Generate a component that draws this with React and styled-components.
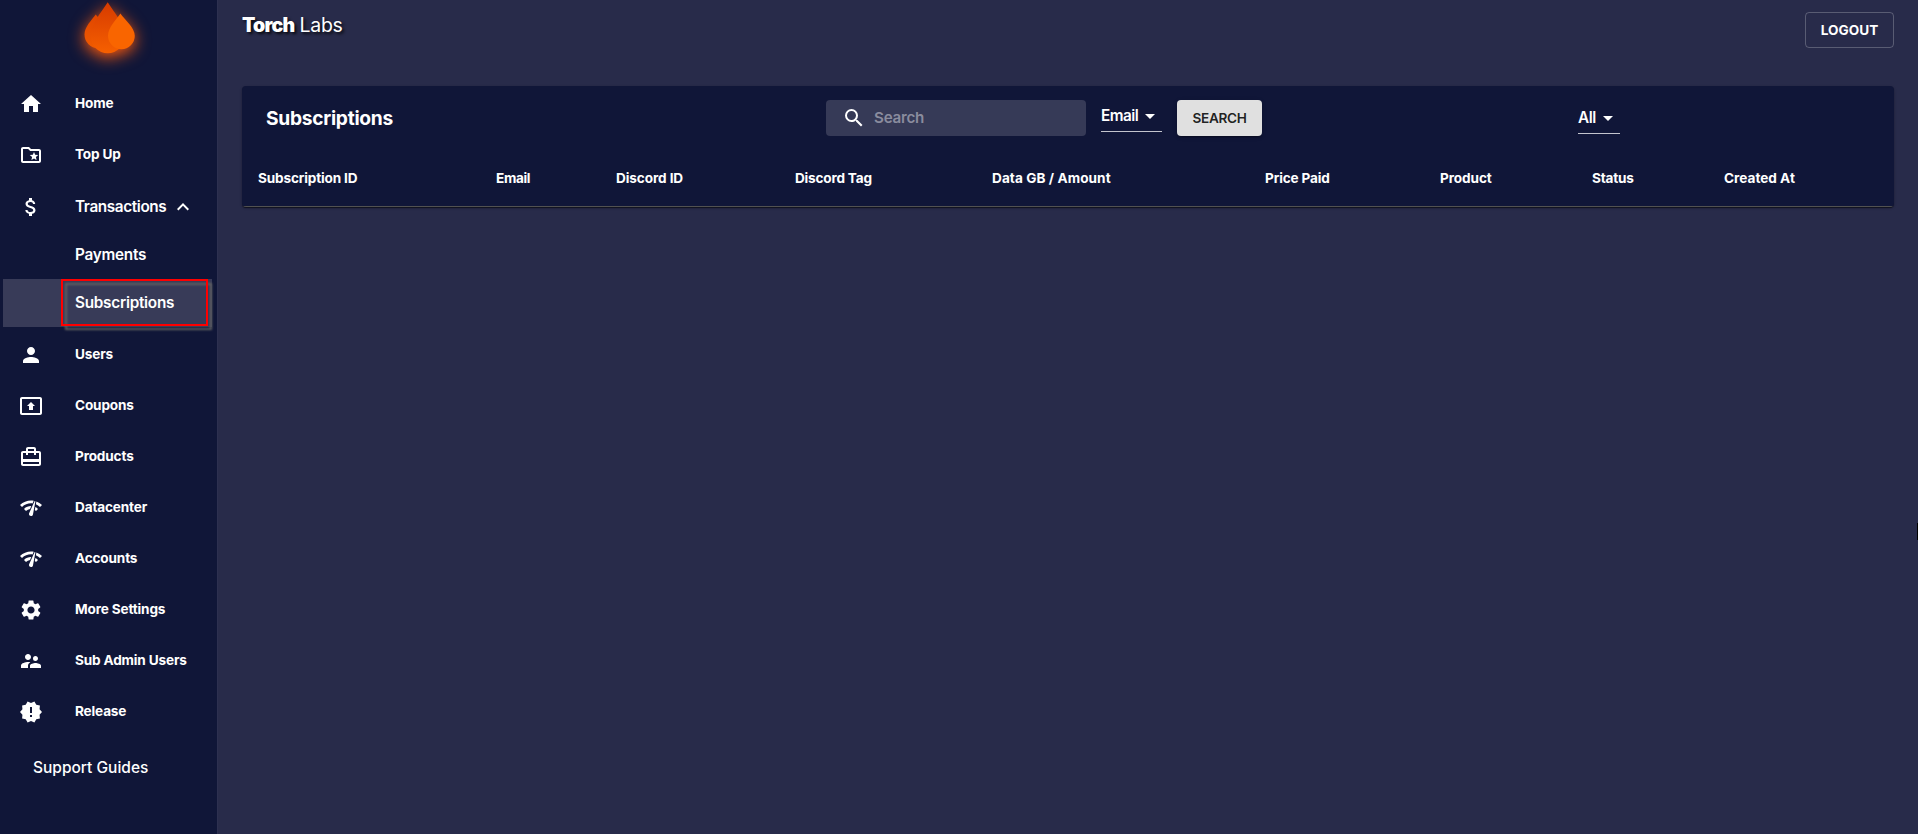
import React from "react";
import styled, { createGlobalStyle } from "styled-components";
import {
  MdHome,
  MdOutlineFolderSpecial,
  MdAttachMoney,
  MdExpandLess,
  MdPerson,
  MdPresentToAll,
  MdCardTravel,
  MdNetworkCheck,
  MdSettings,
  MdSupervisorAccount,
  MdNewReleases,
  MdSearch,
  MdArrowDropDown,
} from "react-icons/md";

const GlobalStyle = createGlobalStyle`
  *, *::before, *::after { box-sizing: border-box; }
  body {
    margin: 0;
    background: #282b4a;
    color: #fff;
    font-family: Inter, "Liberation Sans", sans-serif;
    overflow: hidden;
  }
`;

const Page = styled.div`
  position: relative;
  display: flex;
  height: 100vh;
`;

const Sidebar = styled.nav`
  flex: 0 0 218px;
  display: flex;
  flex-direction: column;
  background: #101638;
  border-right: 1px solid #2d3050;
`;

const LogoWrap = styled.div`
  height: 78px;
  padding-left: 70px;
`;

const LogoSvg = styled.svg`
  display: block;
  overflow: visible;
  filter: drop-shadow(0 4px 8px rgba(255, 90, 10, 1));
`;

const NavItem = styled.a`
  display: flex;
  align-items: center;
  gap: 32px;
  height: 51px;
  margin-top: ${(p) => p.$offset || 0}px;
  padding: 14px 0 13px 19px;
  font-size: 13.6px;
  font-weight: 700;
  letter-spacing: -0.16px;
  line-height: 24px;

  svg {
    flex: none;
  }
`;

const NavLabel = styled.span`
  padding-bottom: 2px;
  white-space: nowrap;
`;

const NavGroup = styled(NavItem)`
  height: 51px;
  padding: 15px 0 12px 19px;
  font-size: 15.3px;
  font-weight: 600;
  letter-spacing: -0.38px;
`;

const GroupLabel = styled.span`
  display: flex;
  align-items: center;
  gap: 5px;

  ${NavLabel} {
    padding-bottom: 0;
  }
`;

const SubItem = styled.a`
  position: relative;
  display: flex;
  align-items: center;
  height: 48px;
  margin: 0 5px 0 3px;
  padding: 0 0 1px 72px;
  background: ${(p) => (p.$active ? "#383b58" : "transparent")};
  font-size: 15.3px;
  font-weight: 600;
  letter-spacing: -0.25px;
`;

const Highlight = styled.span`
  position: absolute;
  top: 0;
  left: 58px;
  width: 147px;
  height: 47px;
  border: 2px solid #f00;
  filter: drop-shadow(4px 4px 1.2px rgba(100, 100, 98, 0.95));
`;

const SupportLink = styled.a`
  margin-top: 19px;
  padding-left: 33px;
  font-size: 15.5px;
  font-weight: 500;
  letter-spacing: 0;
  line-height: 24px;
`;

const Main = styled.main`
  flex: 1;
  display: flex;
  flex-direction: column;
  padding: 12px 24px 0;
`;

const TopBar = styled.header`
  display: flex;
  justify-content: space-between;
  align-items: flex-start;
  height: 74px;
`;

const Brand = styled.h1`
  margin: 0;
  padding-top: 1px;
  font-size: 19.5px;
  font-weight: 400;
  letter-spacing: -0.3px;
  line-height: 24px;
  text-shadow: 2px 2px 3px rgba(0, 0, 0, 0.8);

  strong {
    font-weight: 900;
    letter-spacing: -0.8px;
  }
`;

const Button = styled.button`
  width: ${(p) => p.$width}px;
  height: 36px;
  padding: 0;
  border: 1px solid rgba(255, 255, 255, 0.23);
  border-radius: 4px;
  background: transparent;
  color: #fff;
  font: 700 13.6px Inter, sans-serif;
`;

const SolidButton = styled(Button)`
  margin-left: 15px;
  border: 0;
  background: #e0e0e0;
  color: rgba(0, 0, 0, 0.87);
  font-weight: 600;
  letter-spacing: -0.3px;
  box-shadow: 0 3px 1px -2px rgba(0, 0, 0, 0.2), 0 2px 2px rgba(0, 0, 0, 0.14),
    0 1px 5px rgba(0, 0, 0, 0.12);
`;

const Card = styled.section`
  border-radius: 4px;
  background: #101638;
  box-shadow: 0 2px 1px -1px rgba(0, 0, 0, 0.3), 0 1px 1px rgba(0, 0, 0, 0.3),
    0 1px 3px rgba(0, 0, 0, 0.2);
  overflow: hidden;
`;

const Toolbar = styled.div`
  display: flex;
  align-items: center;
  height: 64px;
  padding-left: 24px;
`;

const Title = styled.h2`
  flex: 0 0 560px;
  margin: 0;
  font-size: 19.2px;
  font-weight: 700;
  letter-spacing: -0.28px;
`;

const SearchField = styled.label`
  display: flex;
  align-items: center;
  gap: 8px;
  width: 260px;
  height: 36px;
  padding-left: 16px;
  border-radius: 4px;
  background: #363a57;
`;

const SearchInput = styled.input`
  width: 200px;
  height: 24px;
  padding: 0 0 2px;
  border: 0;
  outline: 0;
  background: transparent;
  color: #fff;
  font: 600 15.2px Inter, sans-serif;
  letter-spacing: -0.25px;

  &::placeholder {
    color: #8a8c9e;
    opacity: 1;
  }
`;

const Select = styled.div`
  display: flex;
  justify-content: space-between;
  align-items: center;
  width: ${(p) => p.$width}px;
  height: 32px;
  margin: 0 0 ${(p) => p.$lift || 0}px ${(p) => p.$gap}px;
  border-bottom: 1px solid rgba(255, 255, 255, 0.75);
  font-size: 15.3px;
  font-weight: 600;
  letter-spacing: -0.5px;
  white-space: nowrap;

  svg {
    flex: none;
  }
`;

const HeaderRow = styled.div`
  display: grid;
  grid-template-columns: 238px 120px 179px 197px 273px 175px 152px 132px 1fr;
  height: 57px;
  border-bottom: 1px solid #515151;
`;

const HeaderCell = styled.div`
  padding: 16px;
  font-size: 13.6px;
  font-weight: 700;
  letter-spacing: ${(p) => p.$track || 0}px;
  line-height: 24px;
  white-space: nowrap;
`;

const EdgeMark = styled.span`
  position: absolute;
  top: 523px;
  right: 0;
  width: 1px;
  height: 17px;
  background: #000;
`;

const columns = [
  { label: "Subscription ID", track: -0.16 },
  { label: "Email", track: -0.35 },
  { label: "Discord ID", track: -0.1 },
  { label: "Discord Tag", track: -0.2 },
  { label: "Data GB / Amount", track: 0.07 },
  { label: "Price Paid", track: -0.15 },
  { label: "Product", track: -0.1 },
  { label: "Status", track: -0.2 },
  { label: "Created At", track: 0 },
];

const topItems = [
  { label: "Home", Icon: MdHome },
  { label: "Top Up", Icon: MdOutlineFolderSpecial },
];

const lowerItems = [
  { label: "Users", Icon: MdPerson },
  { label: "Coupons", Icon: MdPresentToAll },
  { label: "Products", Icon: MdCardTravel },
  { label: "Datacenter", Icon: MdNetworkCheck },
  { label: "Accounts", Icon: MdNetworkCheck },
  { label: "More Settings", Icon: MdSettings },
  { label: "Sub Admin Users", Icon: MdSupervisorAccount },
  { label: "Release", Icon: MdNewReleases },
];

function Logo() {
  return (
    <LogoSvg width="76" height="60" viewBox="70 0 76 60">
      <defs>
        <linearGradient id="mid" x1="0" y1="0" x2="0" y2="1">
          <stop offset="0" stopColor="#d63a00" />
          <stop offset="1" stopColor="#f66000" />
        </linearGradient>
        <linearGradient id="left" x1="0" y1="0" x2="0" y2="1">
          <stop offset="0" stopColor="#e04600" />
          <stop offset="1" stopColor="#f05a00" />
        </linearGradient>
      </defs>
      <path
        fill="url(#left)"
        d="M95.7 14.6C91.5 20.5 84.5 27 84.5 34.6A13.6 13.6 0 0 0 98.1 48.2A13.6 13.6 0 0 0 111.7 34.6C111.7 27 100 20.5 95.7 14.6Z"
      />
      <path
        fill="url(#mid)"
        d="M107.7 2.3C102 11.5 90.7 24 90.7 36.2A17 17 0 0 0 124.7 36.2C124.7 24 113.4 11.5 107.7 2.3Z"
      />
      <path
        fill="#f96500"
        d="M120.4 13.5C116 20 108 27.5 108 35.8A13.4 13.4 0 0 0 134.8 35.8C134.8 27.5 124.8 20 120.4 13.5Z"
      />
    </LogoSvg>
  );
}

export default function App() {
  return (
    <>
      <GlobalStyle />
      <Page>
        <Sidebar>
          <LogoWrap>
            <Logo />
          </LogoWrap>
          {topItems.map(({ label, Icon }) => (
            <NavItem key={label}>
              <Icon size={24} />
              <NavLabel>{label}</NavLabel>
            </NavItem>
          ))}
          <NavGroup>
            <MdAttachMoney size={24} />
            <GroupLabel>
              <NavLabel>Transactions</NavLabel>
              <MdExpandLess size={24} />
            </GroupLabel>
          </NavGroup>
          <SubItem>Payments</SubItem>
          <SubItem $active>
            Subscriptions
            <Highlight />
          </SubItem>
          {lowerItems.map(({ label, Icon }, i) => (
            <NavItem key={label} $offset={i === 0 ? 2 : 0}>
              <Icon size={24} />
              <NavLabel>{label}</NavLabel>
            </NavItem>
          ))}
          <SupportLink>Support Guides</SupportLink>
        </Sidebar>
        <Main>
          <TopBar>
            <Brand>
              <strong>Torch</strong> Labs
            </Brand>
            <Button $width={89}>LOGOUT</Button>
          </TopBar>
          <Card>
            <Toolbar>
              <Title>Subscriptions</Title>
              <SearchField>
                <MdSearch size={24} />
                <SearchInput placeholder="Search" />
              </SearchField>
              <Select $width={61} $gap={15} $lift={4}>
                Email
                <MdArrowDropDown size={24} />
              </Select>
              <SolidButton $width={85}>SEARCH</SolidButton>
              <Select $width={42} $gap={316}>
                All
                <MdArrowDropDown size={24} />
              </Select>
            </Toolbar>
            <HeaderRow>
              {columns.map(({ label, track }) => (
                <HeaderCell key={label} $track={track}>
                  {label}
                </HeaderCell>
              ))}
            </HeaderRow>
          </Card>
        </Main>
        <EdgeMark />
      </Page>
    </>
  );
}
